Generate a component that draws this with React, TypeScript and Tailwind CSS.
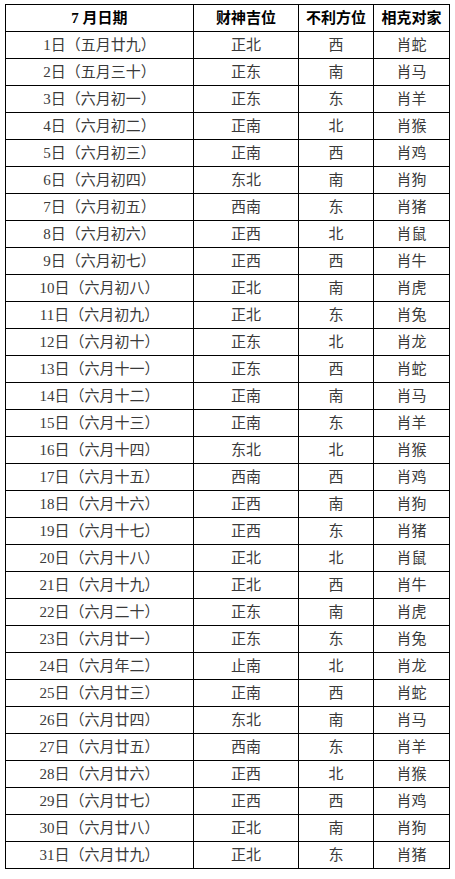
const rows: [string, string, string, string][] = [
  ["1日（五月廿九）", "正北", "西", "肖蛇"],
  ["2日（五月三十）", "正东", "南", "肖马"],
  ["3日（六月初一）", "正东", "东", "肖羊"],
  ["4日（六月初二）", "正南", "北", "肖猴"],
  ["5日（六月初三）", "正南", "西", "肖鸡"],
  ["6日（六月初四）", "东北", "南", "肖狗"],
  ["7日（六月初五）", "西南", "东", "肖猪"],
  ["8日（六月初六）", "正西", "北", "肖鼠"],
  ["9日（六月初七）", "正西", "西", "肖牛"],
  ["10日（六月初八）", "正北", "南", "肖虎"],
  ["11日（六月初九）", "正北", "东", "肖兔"],
  ["12日（六月初十）", "正东", "北", "肖龙"],
  ["13日（六月十一）", "正东", "西", "肖蛇"],
  ["14日（六月十二）", "正南", "南", "肖马"],
  ["15日（六月十三）", "正南", "东", "肖羊"],
  ["16日（六月十四）", "东北", "北", "肖猴"],
  ["17日（六月十五）", "西南", "西", "肖鸡"],
  ["18日（六月十六）", "正西", "南", "肖狗"],
  ["19日（六月十七）", "正西", "东", "肖猪"],
  ["20日（六月十八）", "正北", "北", "肖鼠"],
  ["21日（六月十九）", "正北", "西", "肖牛"],
  ["22日（六月二十）", "正东", "南", "肖虎"],
  ["23日（六月廿一）", "正东", "东", "肖兔"],
  ["24日（六月年二）", "止南", "北", "肖龙"],
  ["25日（六月廿三）", "正南", "西", "肖蛇"],
  ["26日（六月廿四）", "东北", "南", "肖马"],
  ["27日（六月廿五）", "西南", "东", "肖羊"],
  ["28日（六月廿六）", "正西", "北", "肖猴"],
  ["29日（六月廿七）", "正西", "西", "肖鸡"],
  ["30日（六月廿八）", "正北", "南", "肖狗"],
  ["31日（六月廿九）", "正北", "东", "肖猪"],
];

export default function App() {
  return (
    <div className="w-[455px] h-[879px] bg-white pl-[5px] pt-[4px] font-[family-name:Liberation_Serif,Noto_Sans_CJK_SC,serif]">
      <table className="border-collapse table-fixed w-[444px] text-[15px]">
        <colgroup>
          <col className="w-[188px]" />
          <col className="w-[105px]" />
          <col className="w-[75px]" />
          <col className="w-[76px]" />
        </colgroup>
        <thead>
          <tr className="h-[27px] text-black font-bold">
            <th className="border border-black p-0">7 月日期</th>
            <th className="border border-black p-0">财神吉位</th>
            <th className="border border-black p-0">不利方位</th>
            <th className="border border-black p-0">相克对家</th>
          </tr>
        </thead>
        <tbody>
          {rows.map((r) => (
            <tr key={r[0]} className="h-[27px] text-[#3a3a3a]">
              {r.map((c, i) => (
                <td key={i} className="border border-black p-0 text-center leading-none">
                  {c}
                </td>
              ))}
            </tr>
          ))}
        </tbody>
      </table>
    </div>
  );
}
